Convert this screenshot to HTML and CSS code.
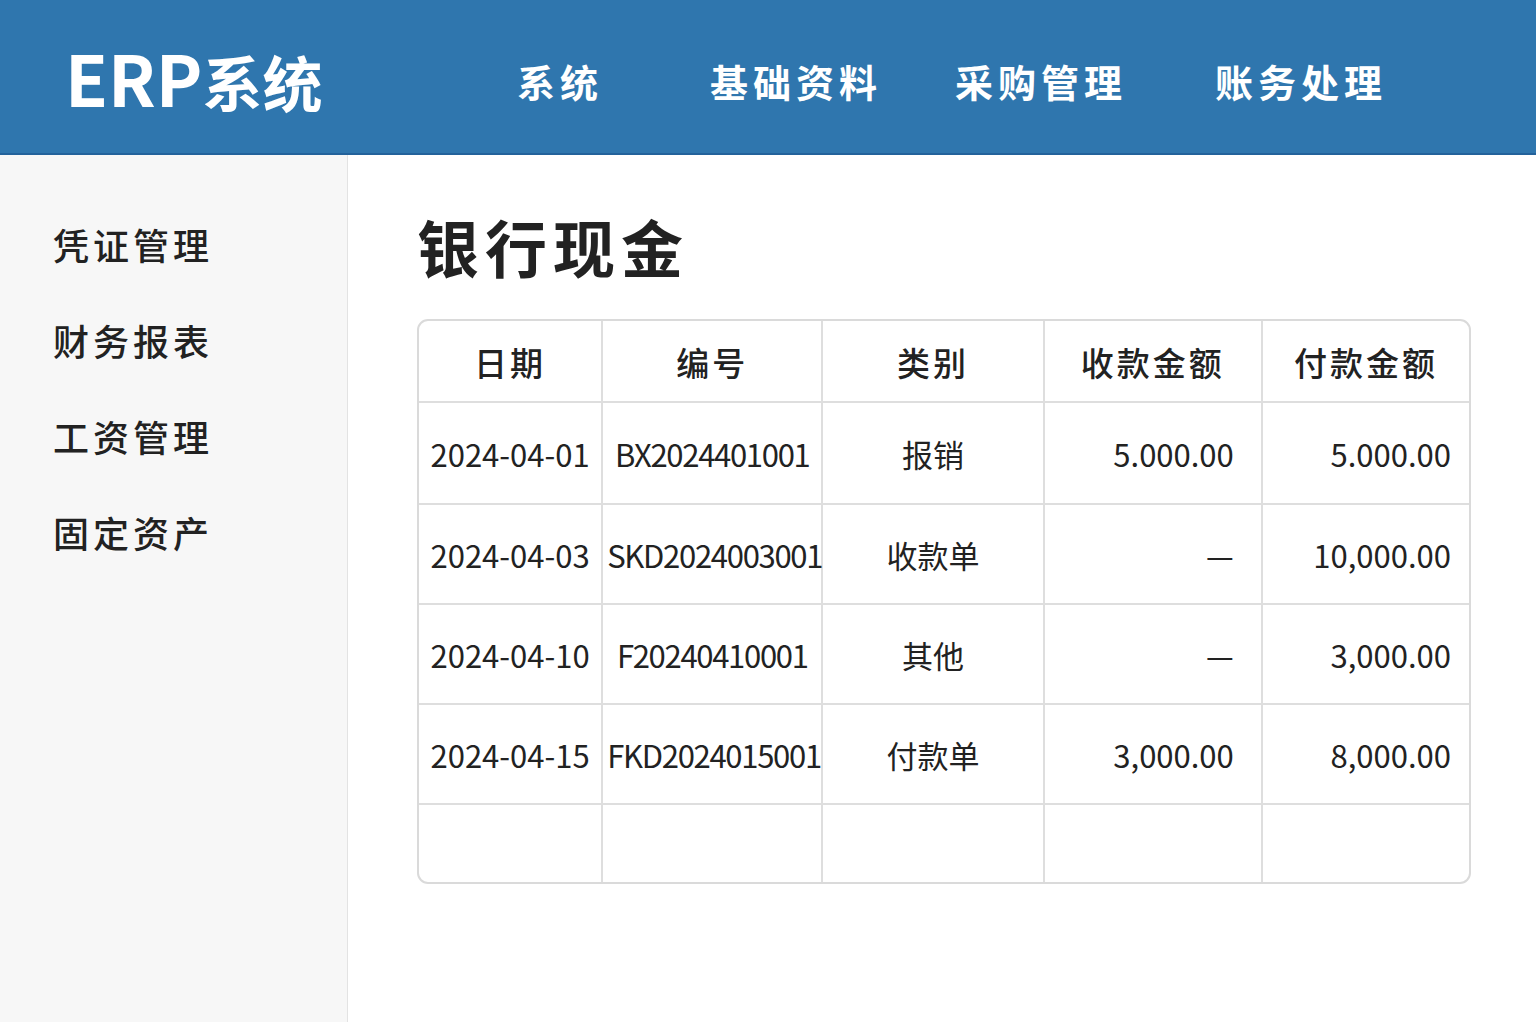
FILE: index.html
```html
<!DOCTYPE html>
<html lang="zh-CN">
<head>
    <meta charset="UTF-8">
    <meta name="viewport" content="width=device-width, initial-scale=1.0">
    <title>ERP系统 - 银行现金</title>
    <link rel="stylesheet" href="styles.css">
</head>
<body>

    <div class="header">
        <div class="logo"><span class="logo-en">ERP</span>系统</div>
        <div class="nav">
            <a href="#" class="nav-item">系统</a>
            <a href="#" class="nav-item">基础资料</a>
            <a href="#" class="nav-item">采购管理</a>
            <a href="#" class="nav-item">账务处理</a>
        </div>
    </div>

    <div class="page">
        <div class="sidebar">
            <a href="#" class="side-item">凭证管理</a>
            <a href="#" class="side-item">财务报表</a>
            <a href="#" class="side-item">工资管理</a>
            <a href="#" class="side-item">固定资产</a>
        </div>

        <div class="main">
            <h1 class="title">银行现金</h1>

            <div class="table-box">
                <table class="cash-table">
                    <colgroup>
                        <col style="width: 184px">
                        <col style="width: 220px">
                        <col style="width: 221px">
                        <col style="width: 218px">
                        <col style="width: 206px">
                    </colgroup>
                    <thead>
                        <tr>
                            <th>日期</th>
                            <th>编号</th>
                            <th>类别</th>
                            <th>收款金额</th>
                            <th>付款金额</th>
                        </tr>
                    </thead>
                    <tbody>
                        <tr class="first">
                            <td>2024-04-01</td>
                            <td class="code">BX2024401001</td>
                            <td>报销</td>
                            <td class="num">5.000.00</td>
                            <td class="num">5.000.00</td>
                        </tr>
                        <tr>
                            <td>2024-04-03</td>
                            <td class="code">SKD2024003001</td>
                            <td>收款单</td>
                            <td class="num">—</td>
                            <td class="num">10,000.00</td>
                        </tr>
                        <tr>
                            <td>2024-04-10</td>
                            <td class="code">F20240410001</td>
                            <td>其他</td>
                            <td class="num">—</td>
                            <td class="num">3,000.00</td>
                        </tr>
                        <tr>
                            <td>2024-04-15</td>
                            <td class="code">FKD2024015001</td>
                            <td>付款单</td>
                            <td class="num">3,000.00</td>
                            <td class="num">8,000.00</td>
                        </tr>
                        <tr class="empty">
                            <td></td>
                            <td></td>
                            <td></td>
                            <td></td>
                            <td></td>
                        </tr>
                    </tbody>
                </table>
            </div>
        </div>
    </div>

</body>
</html>
```

FILE: styles.css
```css
body {
    margin: 0;
    padding: 0;
    font-family: "Noto Sans CJK SC", "Noto Sans", sans-serif;
    color: #222;
    background-color: #fff;
}

a {
    text-decoration: none;
    color: inherit;
}

.header {
    height: 155px;
    background-color: #2f76ae;
    border-bottom: 2px solid #23629b;
    display: flex;
    align-items: center;
    padding-left: 65px;
    box-sizing: border-box;
}

.logo {
    color: #fff;
    font-size: 60px;
    font-weight: 700;
    line-height: 1;
    width: 452px;
    white-space: nowrap;
}

.logo-en {
    font-size: 70px;
}

.nav {
    display: flex;
    align-items: center;
    gap: 73px;
    padding-top: 8px;
}

.nav-item {
    color: #fff;
    font-size: 38px;
    font-weight: 700;
    letter-spacing: 5px;
    line-height: 1;
}

.nav-item:first-child {
    margin-right: 34px;
}

.nav-item:last-child {
    margin-left: 15px;
}

.page {
    display: flex;
    min-height: 867px;
}

.sidebar {
    width: 348px;
    background-color: #f7f7f7;
    border-right: 1px solid #e3e3e3;
    padding: 41px 0 0 53px;
    box-sizing: border-box;
    display: flex;
    flex-direction: column;
}

.side-item {
    font-size: 36px;
    font-weight: 500;
    letter-spacing: 4px;
    line-height: 96px;
    height: 96px;
}

.main {
    flex: 1;
    padding: 60px 0 0 69px;
}

.title {
    margin: 0 0 42px 0;
    font-size: 62px;
    font-weight: 700;
    letter-spacing: 6px;
    line-height: 62px;
    color: #222;
}

.table-box {
    width: 1054px;
    border: 2px solid #dadada;
    border-radius: 11px;
    overflow: hidden;
    box-sizing: border-box;
}

.cash-table {
    width: 1050px;
    table-layout: fixed;
    border-collapse: separate;
    border-spacing: 0;
}

.cash-table th,
.cash-table td {
    border-right: 2px solid #dedede;
    border-bottom: 2px solid #dedede;
    padding: 0 4px;
    white-space: nowrap;
    text-align: center;
    overflow: visible;
}

.cash-table th:last-child,
.cash-table td:last-child {
    border-right: none;
}

.cash-table th {
    height: 78px;
    font-size: 33px;
    font-weight: 500;
    letter-spacing: 3px;
    padding-top: 2px;
}

.cash-table td {
    height: 98px;
    font-size: 31px;
    font-weight: 400;
}

.cash-table td.code {
    letter-spacing: -1.3px;
}

.cash-table tr.first td {
    height: 100px;
}

.cash-table td.num {
    text-align: right;
    padding-right: 27px;
}

.cash-table tr td:last-child.num {
    padding-right: 18px;
}

.cash-table tr.empty td {
    height: 77px;
    border-bottom: none;
}
```
